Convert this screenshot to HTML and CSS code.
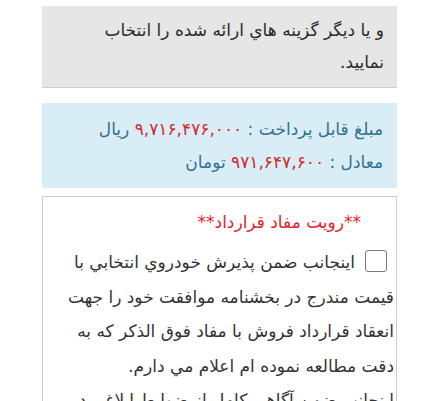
FILE: index.html
```html
<!DOCTYPE html>
<html lang="fa" dir="rtl">
<head>
<meta charset="utf-8">
<link rel="stylesheet" href="styles.css">
</head>
<body>
<div class="topbar"></div>
<main class="page">
  <div class="note">و يا ديگر گزينه هاي ارائه شده را انتخاب<br>نماييد.</div>
  <div class="amount">
    <div class="row">مبلغ قابل پرداخت : <span class="num">۹,۷۱۶,۴۷۶,۰۰۰</span> ريال</div>
    <div class="row">معادل : <span class="num">۹۷۱,۶۴۷,۶۰۰</span> تومان</div>
  </div>
  <div class="contract">
    <div class="title">**رويت مفاد قرارداد**</div>
    <div class="terms">
      <span class="check"></span><span class="first">اينجانب ضمن پذيرش خودروي انتخابي با</span><br>
      قيمت مندرج در بخشنامه موافقت خود را جهت<br>
      انعقاد قرارداد فروش با مفاد فوق الذکر که به<br>
      دقت مطالعه نموده ام اعلام مي دارم.
    </div>
    <div class="terms">اينجانب ضمن آگاهي كامل از ضوابط ابلاغي در</div>
  </div>
</main>
</body>
</html>
```
FILE: styles.css
```css
html, body {
  margin: 0;
  padding: 0;
  background: #ffffff;
}
body {
  font-family: "DejaVu Sans", "Noto Sans", sans-serif;
  font-size: 17px;
  color: #333333;
  overflow: hidden;
}
.topbar {
  height: 6px;
  background: #ffffff;
}
.page {
  display: flex;
  flex-direction: column;
  margin: 0 37px 0 42px;
}
.note {
  background: #e6e6e6;
  border-bottom: 1px solid #cfcfcf;
  padding: 8px 13px 9px;
  line-height: 32px;
  color: #2a2a2a;
}
.amount {
  margin-top: 15px;
  background: #d9edf7;
  color: #31708f;
  padding: 10px 14px 9px;
  line-height: 33px;
}
.num {
  color: #d42a30;
}
.contract {
  margin-top: 8px;
  border: 1px solid #cccccc;
  padding: 8px 2px 0 0;
  height: 260px;
}
.title {
  color: #e2262c;
  line-height: 34px;
  padding-right: 33px;
}
.terms {
  margin-top: 6px;
  line-height: 34.5px;
  white-space: nowrap;
}
.check {
  display: inline-block;
  width: 20px;
  height: 20px;
  border: 1px solid #7a7a7a;
  border-radius: 3px;
  vertical-align: -4px;
  margin-right: 7px;
  margin-left: 10px;
}
.terms + .terms {
  margin-top: 0;
}
```
